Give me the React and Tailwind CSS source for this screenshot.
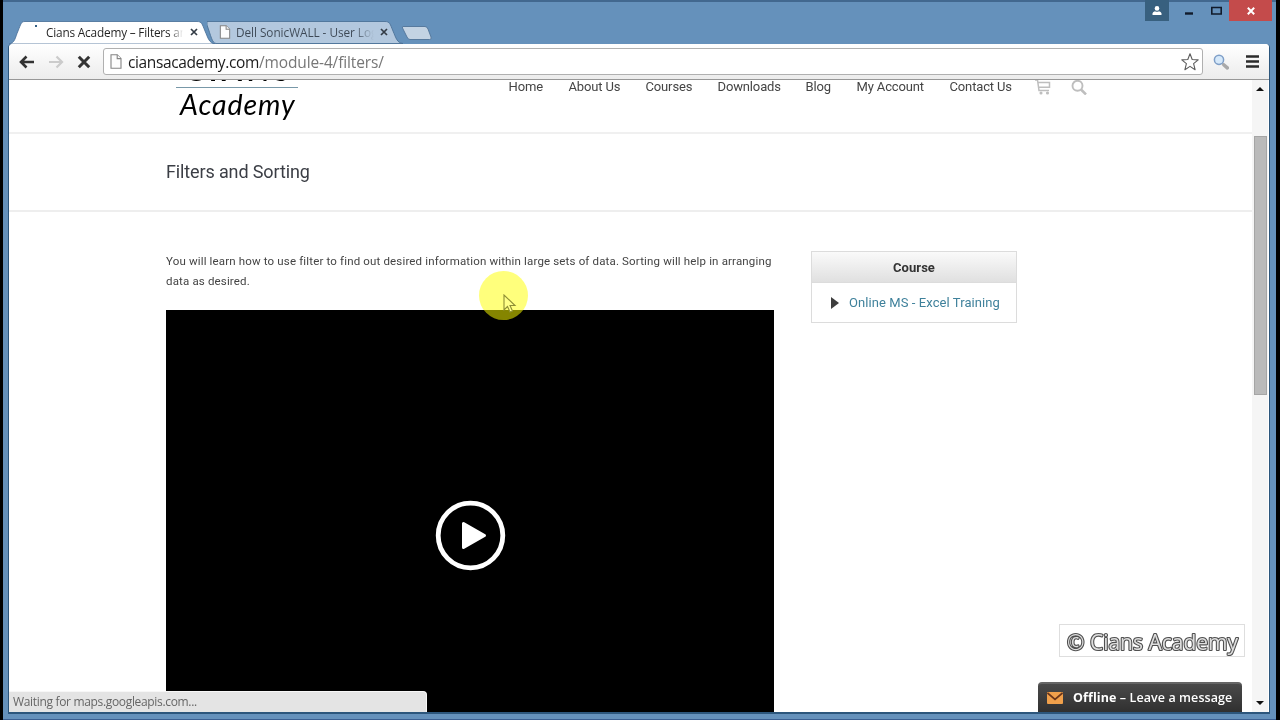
import React from "react";

const NAV = [
  { label: "Home", w: "w-[35px]" },
  { label: "About Us", w: "w-[52px]" },
  { label: "Courses", w: "w-[47px]" },
  { label: "Downloads", w: "w-[63px]" },
  { label: "Blog", w: "w-[26px]" },
  { label: "My Account", w: "w-[68px]" },
  { label: "Contact Us", w: "w-[63px]" },
];

function PageIcon({ className }) {
  return (
    <svg className={className} viewBox="0 0 12 15" fill="#fdfdfd" stroke="#858585" strokeWidth="1.1">
      <path d="M1 .8h6.2L11 4.6v9.6H1z" />
      <path d="M7.2 .8v3.8H11" />
    </svg>
  );
}

function TabClose() {
  return (
    <svg className="h-2 w-2 shrink-0" viewBox="0 0 8 8" stroke="#333c46" strokeWidth="1.7">
      <path d="M1 1l6 6M7 1L1 7" />
    </svg>
  );
}

function TitleBar() {
  return (
    <div className="flex h-11 shrink-0 items-start justify-between bg-[#6591bb] shadow-[inset_0_2px_0_#42688f]">
      <div className="flex pl-1.5 pt-[21px]">
        <div className="relative z-10 flex h-[23px] w-[206px] items-center pb-px pl-[26px]">
          <svg className="absolute inset-0 h-full w-full" viewBox="0 0 206 23" preserveAspectRatio="none">
            <path d="M0 23C6 22 6 17 9 10C12 3 12 .5 16 .5H188C193 .5 193 3 196 10C199 17 200 22 206 23Z" fill="#fff" stroke="#446b94" strokeWidth=".8" />
          </svg>
          <span className="relative -top-1.5 h-[2px] w-[2px] bg-[#346085]" />
          <span className="relative ml-[9px] w-[137px] overflow-hidden whitespace-nowrap bg-gradient-to-r from-[#222] from-90% to-white bg-clip-text font-['Open_Sans',sans-serif] text-[11.8px] leading-5 tracking-[-0.18px] text-transparent">
            Cians Academy – Filters and Sorting
          </span>
          <span className="relative ml-[7px] flex"><TabClose /></span>
        </div>
        <div className="relative -ml-2 flex h-[23px] w-[196px] items-center pb-px pl-[12px]">
          <svg className="absolute inset-0 h-full w-full" viewBox="0 0 196 23" preserveAspectRatio="none">
            <path d="M0 .5H178C183 .5 183 3 186 10C189 17 190 22 196 22.5H9C5 22 4 15 0 4Z" fill="#b3c8de" stroke="#4c7297" strokeWidth=".9" />
          </svg>
          <PageIcon className="relative h-3.5 w-3" />
          <span className="relative ml-[5px] w-[138px] overflow-hidden whitespace-nowrap bg-gradient-to-r from-[#3d4855] from-85% to-[#b3c8de] bg-clip-text font-['Open_Sans',sans-serif] text-[11.8px] leading-5 tracking-[-0.05px] text-transparent">
            Dell SonicWALL - User Login
          </span>
          <span className="relative ml-[6px] flex"><TabClose /></span>
        </div>
        <svg className="-ml-0.5 mt-1 h-[16px] w-[32px]" viewBox="0 0 32 16">
          <path d="M2 1.5H24Q26 1.5 27 4L30 12Q31 14.500 28.500 14.500H9Q7 14.500 6 12L1.500 3Q1 1.500 2 1.500Z" fill="#c3d3e3" stroke="#507499" strokeWidth=".9" />
        </svg>
      </div>
      <div className="flex h-[21px] items-center">
        <div className="flex h-full w-6 items-center justify-center bg-[#38607f]">
          <svg className="h-[9px] w-[10px]" viewBox="0 0 10 9" fill="#fff">
            <circle cx="5" cy="2.400" r="2.300" />
            <path d="M.5 9V7.200Q1 5.600 3 5.200Q5 6.400 7 5.200Q9 5.600 9.500 7.200V9Z" />
          </svg>
        </div>
        <svg className="ml-4 h-[9px] w-[8px]" viewBox="0 0 8 9"><path d="M0 7.500h8" stroke="#111b2b" strokeWidth="2.400" /></svg>
        <svg className="ml-[18px] h-[9px] w-[11px]" viewBox="0 0 11 9"><path d="M.8 1.500h9.400v6.500H.8z" fill="none" stroke="#111b2b" strokeWidth="1.600" /></svg>
        <div className="ml-[7px] mr-1 flex h-full w-[43px] items-center justify-center bg-[#c44b4b]">
          <svg className="h-[8px] w-[8px]" viewBox="0 0 8 8" stroke="#fff" strokeWidth="2"><path d="M.8 .8l6.400 6.400M7.200 .8L.8 7.200" /></svg>
        </div>
      </div>
    </div>
  );
}

function Toolbar() {
  return (
    <div className="flex h-9 shrink-0 items-center rounded-t border-b border-[#979797] bg-gradient-to-b from-white to-[#ececec] pl-[10px]">
      <svg className="h-3.5 w-4" viewBox="0 0 16 14" fill="none" stroke="#333" strokeWidth="2.600"><path d="M15 7H2.500M7.500 1.500L2 7l5.500 5.500" /></svg>
      <svg className="ml-[13px] h-3.5 w-4" viewBox="0 0 16 14" fill="none" stroke="#cbcbcb" strokeWidth="2.200"><path d="M1 7h12.500M8.500 1.500L14 7l-5.500 5.500" /></svg>
      <svg className="ml-[13px] h-3.5 w-3.5" viewBox="0 0 14 14" stroke="#333" strokeWidth="3"><path d="M1.800 1.800l10.400 10.400M12.200 1.800L1.800 12.200" /></svg>
      <div className="ml-3 flex h-[27px] w-[1100px] items-center rounded-[3px] border border-[#b0b0b0] bg-white pl-[6px] pr-[3px]">
        <PageIcon className="h-[15px] w-3" />
        <span className="ml-[6px] flex-1 whitespace-nowrap font-['Open_Sans',sans-serif] text-[15.5px] leading-5 tracking-[-0.38px] text-[#1b1b1b]">
          ciansacademy.com<span className="tracking-[-0.12px] text-[#777]">/module-4/filters/</span>
        </span>
        <svg className="h-[18px] w-[18px]" viewBox="0 0 18 18" fill="#fff" stroke="#5c5c5c" strokeWidth="1.100" strokeLinejoin="round">
          <path d="M9 .8l2.200 5.700 6 .4-4.600 3.800 1.500 6L9 13.400l-5.100 3.300 1.500-6L.8 6.900l6-.4z" />
        </svg>
      </div>
      <svg className="ml-2.5 h-4 w-4" viewBox="0 0 16 16">
        <path d="M9.500 9.500l2 2" stroke="#8c8c8c" strokeWidth="1.600" />
        <path d="M11 11l3.300 2.800" stroke="#a9a9a9" strokeWidth="3.600" strokeLinecap="round" />
        <circle cx="6" cy="5.800" r="4.600" fill="#d6e9fa" stroke="#7f9fc8" strokeWidth="1.500" />
      </svg>
      <svg className="ml-[17px] h-[13px] w-[13px]" viewBox="0 0 13 13" stroke="#2b2b2b" strokeWidth="2.700"><path d="M0 1.500h13M0 6.500h13M0 11.500h13" /></svg>
    </div>
  );
}

function SiteHeader() {
  return (
    <header className="flex h-[54px] shrink-0 items-start overflow-hidden border-b-2 border-[#f0f0f0] pl-[167px]">
      <div className="-mt-[24px] w-[122px] shrink-0 whitespace-nowrap text-black">
        <div className="h-8 border-b border-[#7898a8] pl-[9px] font-['Lato',sans-serif] text-[29px] font-bold leading-[27px] tracking-[4.5px]">CIANS</div>
        <div className="pl-1 font-['Lato',sans-serif] text-[28.5px] italic leading-[32px] tracking-[0.9px]">Academy</div>
      </div>
      <nav className="-mt-px ml-[210.5px] flex h-4 items-center gap-[25px] font-['Roboto',sans-serif] text-[13px] tracking-[-0.14px] text-[#444]">
        {NAV.map((n) => (
          <a key={n.label} className={`${n.w} whitespace-nowrap leading-4`}>{n.label}</a>
        ))}
      </nav>
      <svg className="-mt-px ml-[22px] h-4 w-4 shrink-0" viewBox="0 0 16 16" fill="none" stroke="#bebebe" strokeWidth="1.500">
        <path d="M0 1h2.500l1.500 10.500H14M3.300 3.500H14.500V8.300H4.200" />
        <circle cx="6" cy="14" r=".8" /><circle cx="12.500" cy="14" r=".8" />
      </svg>
      <svg className="-mt-px ml-5 h-4 w-4 shrink-0" viewBox="0 0 16 16" fill="none" stroke="#bebebe" strokeWidth="1.900">
        <circle cx="6.500" cy="6.800" r="5" /><path d="M10 10.500l5 5" strokeWidth="2.500" />
      </svg>
    </header>
  );
}

function Video() {
  return (
    <div className="flex h-[402px] w-[608px] justify-center bg-black pt-[190px]">
      <svg className="h-[71px] w-[71px]" viewBox="0 0 71 71">
        <circle cx="35.500" cy="35.500" r="32.300" fill="none" stroke="#fff" strokeWidth="4.800" />
        <path d="M28.500 23.500v24L49.500 35.500z" fill="#fff" stroke="#fff" strokeWidth="3" strokeLinejoin="round" />
      </svg>
    </div>
  );
}

function SideBox() {
  return (
    <aside className="ml-[37px] mt-[39px] flex h-[72px] w-[206px] flex-col border border-[#dcdcdc] font-['Roboto',sans-serif] text-[13px]">
      <h3 className="flex h-[31px] items-center justify-center border-b border-[#dcdcdc] bg-gradient-to-b from-[#fafafa] to-[#e0e0e0] pt-px font-bold tracking-[0.05px] text-[#333]">Course</h3>
      <div className="flex flex-1 items-center pl-[19px] pt-px">
        <svg className="h-3 w-2" viewBox="0 0 8 12"><path d="M0 0l8 6-8 6z" fill="#3d3d3d" /></svg>
        <a className="ml-[10px] whitespace-nowrap tracking-[0.08px] text-[#3f819b]">Online MS - Excel Training</a>
      </div>
    </aside>
  );
}

export default function App() {
  return (
    <div className="relative flex h-[720px] w-[1280px] flex-col overflow-hidden border-l-[3px] border-r-4 border-black bg-[#6591bb] shadow-[inset_0_-1px_0_#3b5f91]">
      <TitleBar />
      <div className="ml-1.5 mr-1.5 flex h-[670px] flex-col rounded-t border-r border-b-2 border-[#2c567c] bg-white shadow-[-1px_0_0_#2c567c]">
        <Toolbar />
        <div className="flex h-[632px] min-h-0">
          <div className="flex w-[1243px] flex-col overflow-hidden">
            <SiteHeader />
            <div className="flex h-[78px] shrink-0 items-center border-b-2 border-[#eeeeee] pl-[157px] font-['Roboto',sans-serif] text-[18px] text-[#3b3e45]">
              <h1 className="leading-6 tracking-[-0.13px]">Filters and Sorting</h1>
            </div>
            <main className="flex pl-[157px]">
              <div className="w-[608px]">
                <p className="mb-[19px] mt-[39px] h-10 whitespace-nowrap font-['Roboto',sans-serif] text-[11.5px] leading-5 tracking-[0.158px] text-[#444]">
                  You will learn how to use filter to find out desired information within large sets of data. Sorting will help in arranging<br />data as desired.
                </p>
                <Video />
              </div>
              <SideBox />
            </main>
          </div>
          <div className="flex w-4 flex-col items-center justify-between bg-[#f5f5f5] py-[6px]">
            <svg className="h-1.5 w-2" viewBox="0 0 8 6"><path d="M4 1l4 4H0z" fill="#111" /></svg>
            <div className="mb-auto mt-[44px] h-[259px] w-[13px] border border-[#a5a5a5] bg-[#bababa]" />
            <svg className="h-1.5 w-2" viewBox="0 0 8 6"><path d="M4 5l4-4H0z" fill="#111" /></svg>
          </div>
        </div>
      </div>

      <div className="absolute left-[6px] top-[691px] flex h-[21px] w-[418px] items-center rounded-tr border-t border-r border-[#f7f7f7] bg-[#e4e4e4] pl-1 font-['Open_Sans',sans-serif] text-[12px] tracking-[-0.33px] text-[#666]">
        Waiting for maps.googleapis.com...
      </div>

      <div className="absolute left-[476px] top-[271px] h-[49px] w-[49px] rounded-full bg-[#ffff7c] mix-blend-multiply" />
      <div className="absolute left-[476px] top-[271px] h-[49px] w-[49px] overflow-hidden rounded-full">
        <div className="mt-[39px] h-2.5 bg-[#858500]" />
      </div>
      <svg className="absolute left-[500px] top-[294px] h-5 w-3.5" viewBox="0 0 14 20">
        <path d="M1 1v15l3.500-3.500L7 18l2.500-1-2.500-5.500H12z" fill="#ffff88" stroke="#8f8f35" strokeWidth="1.100" />
      </svg>

      <div className="absolute left-[1056px] top-[624px] flex h-[33px] w-[186px] items-center border border-[#dedede] bg-white pl-[6px]">
        <svg className="h-[30px] w-[178px]" viewBox="0 0 178 30" fontFamily="Open Sans, sans-serif" fill="#dedede" stroke="#505050" strokeWidth="2.200" paintOrder="stroke" strokeLinejoin="round">
          <text x="1" y="24" fontSize="21" textLength="171" lengthAdjust="spacingAndGlyphs">© Cians Academy</text>
        </svg>
      </div>

      <div className="absolute left-[1035px] top-[682px] flex h-[30px] w-[204px] items-center rounded-t-[4px] border-t-2 border-[#666] bg-gradient-to-b from-[#4a4a4a] to-[#303030] pl-[9px] text-white">
        <svg className="h-3 w-4" viewBox="0 0 16 12"><rect width="16" height="12" rx="1" fill="#f0a04b" /><path d="M.5 1l7.500 6.500L15.500 1" fill="none" stroke="#6a351a" strokeWidth="1.700" /></svg>
        <span className="ml-[10px] whitespace-nowrap font-['Open_Sans',sans-serif] text-[12.5px] font-semibold leading-4 tracking-[0.09px]">
          <b className="font-bold">Offline</b> – Leave a message
        </span>
      </div>
    </div>
  );
}
